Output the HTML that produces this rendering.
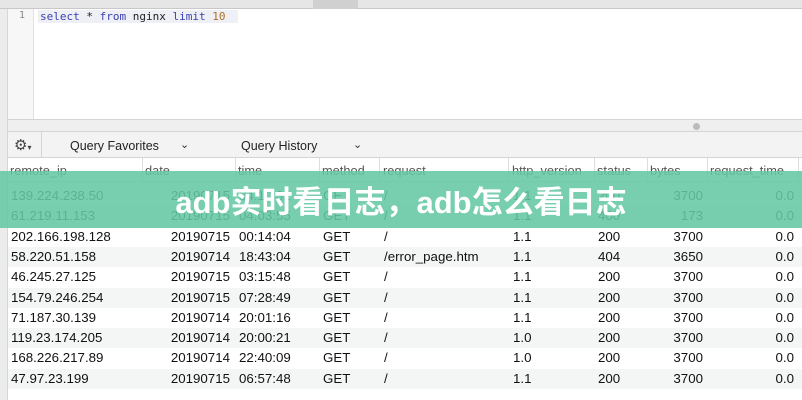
<!DOCTYPE html>
<html><head><meta charset="utf-8"><style>
*{margin:0;padding:0;box-sizing:border-box}
body{width:802px;height:400px;overflow:hidden;background:#fff;font-family:"Liberation Sans","DejaVu Sans",sans-serif;position:relative;font-size:13.3px;color:#111}
.abs{position:absolute}
.mono{font-family:"DejaVu Sans Mono","Liberation Mono",monospace}
.row{position:absolute;left:8px;width:794px;height:20.3px}
.row span{position:absolute;top:2px;white-space:nowrap}
.hd span{position:absolute;top:5px;color:#555;white-space:nowrap;font-size:12.8px}
.sep{position:absolute;top:0;width:1px;height:24px;background:#ddd}
</style></head><body>
<div class="abs" style="left:0;top:0;width:802px;height:9px;background:#e6e6e6;border-bottom:1px solid #c8c8c8"></div>
<div class="abs" style="left:313px;top:0;width:45px;height:9px;background:#d0d0d0"></div>
<div class="abs" style="left:0;top:9px;width:8px;height:391px;background:#ececec;border-right:1px solid #d6d6d6"></div>
<div class="abs" style="left:8px;top:9px;width:26px;height:110px;background:#f7f7f7;border-right:1px solid #e2e2e2"></div>
<div class="abs mono" style="left:19px;top:10px;font-size:10px;color:#888">1</div>
<div class="abs mono" style="left:38px;top:10px;height:13px;width:200px;background:#eef0f6"></div>
<div class="abs mono" style="left:40px;top:10px;font-size:11px;color:#222"><span style="color:#3a3fb0">select</span> * <span style="color:#3a3fb0">from</span> nginx <span style="color:#3a3fb0">limit</span> <span style="color:#b0702a">10</span></div>
<div class="abs" style="left:8px;top:119px;width:794px;height:13px;background:#efefef;border-top:1px solid #d4d4d4;border-bottom:1px solid #d4d4d4"></div>
<div class="abs" style="left:693px;top:123px;width:7px;height:7px;border-radius:50%;background:#bbb"></div>
<div class="abs" style="left:8px;top:132px;width:794px;height:26px;background:#f3f3f3;border-bottom:1px solid #d4d4d4"></div>
<div class="abs" style="left:41px;top:132px;width:1px;height:26px;background:#d4d4d4"></div>
<div class="abs" style="left:14px;top:136px;font-size:15px;color:#444">⚙<span style="font-size:8px">▾</span></div>
<div class="abs" style="left:70px;top:139px;font-size:12.5px;color:#222">Query Favorites</div>
<div class="abs" style="left:180px;top:138px;font-size:11px;color:#333">⌄</div>
<div class="abs" style="left:241px;top:139px;font-size:12.5px;color:#222">Query History</div>
<div class="abs" style="left:353px;top:138px;font-size:11px;color:#333">⌄</div>
<div class="abs hd" style="left:8px;top:158px;width:794px;height:24px;border-bottom:1px solid #ddd">
<span style="left:2px">remote_ip</span><span style="left:137px">date</span><span style="left:230px">time</span><span style="left:314px">method</span><span style="left:375px">request</span><span style="left:504px">http_version</span><span style="left:589px">status</span><span style="left:642px">bytes</span><span style="left:702px">request_time</span>
<i class="sep" style="left:134px"></i><i class="sep" style="left:227px"></i><i class="sep" style="left:311px"></i><i class="sep" style="left:371px"></i><i class="sep" style="left:500px"></i><i class="sep" style="left:586px"></i><i class="sep" style="left:639px"></i><i class="sep" style="left:699px"></i><i class="sep" style="left:790px"></i>
</div>
<div id="rows"></div>
<script>
var d=[["139.224.238.50","20190715","04:10:32","GET","/","1.1","200","3700"],
["61.219.11.153","20190715","04:03:55","GET","/","1.1","400","173"],
["202.166.198.128","20190715","00:14:04","GET","/","1.1","200","3700"],
["58.220.51.158","20190714","18:43:04","GET","/error_page.htm","1.1","404","3650"],
["46.245.27.125","20190715","03:15:48","GET","/","1.1","200","3700"],
["154.79.246.254","20190715","07:28:49","GET","/","1.1","200","3700"],
["71.187.30.139","20190714","20:01:16","GET","/","1.1","200","3700"],
["119.23.174.205","20190714","20:00:21","GET","/","1.0","200","3700"],
["168.226.217.89","20190714","22:40:09","GET","/","1.0","200","3700"],
["47.97.23.199","20190715","06:57:48","GET","/","1.1","200","3700"]];
var h="";
d.forEach(function(r,i){
h+='<div class="row" style="top:'+(186+i*20.3)+'px;background:'+(i%2?'#f4f5f5':'#fff')+'">'+
'<span style="left:3px">'+r[0]+'</span><span style="right:572px">'+r[1]+'</span><span style="left:231px">'+r[2]+'</span><span style="left:315px">'+r[3]+'</span><span style="left:376px">'+r[4]+'</span><span style="left:505px">'+r[5]+'</span><span style="left:590px">'+r[6]+'</span><span style="right:99px">'+r[7]+'</span><span style="right:8px">0.0</span></div>';});
document.getElementById("rows").innerHTML=h;
</script>
<div class="abs" style="left:0;top:171px;width:802px;height:57px;background:rgba(100,200,165,0.88)"></div>
<div class="abs" style="left:0;top:183px;width:802px;text-align:center;color:#fff;font-weight:bold;font-size:31px;line-height:40px;font-family:'Liberation Sans','Noto Sans CJK SC',sans-serif">adb实时看日志，adb怎么看日志</div>
</body></html>
